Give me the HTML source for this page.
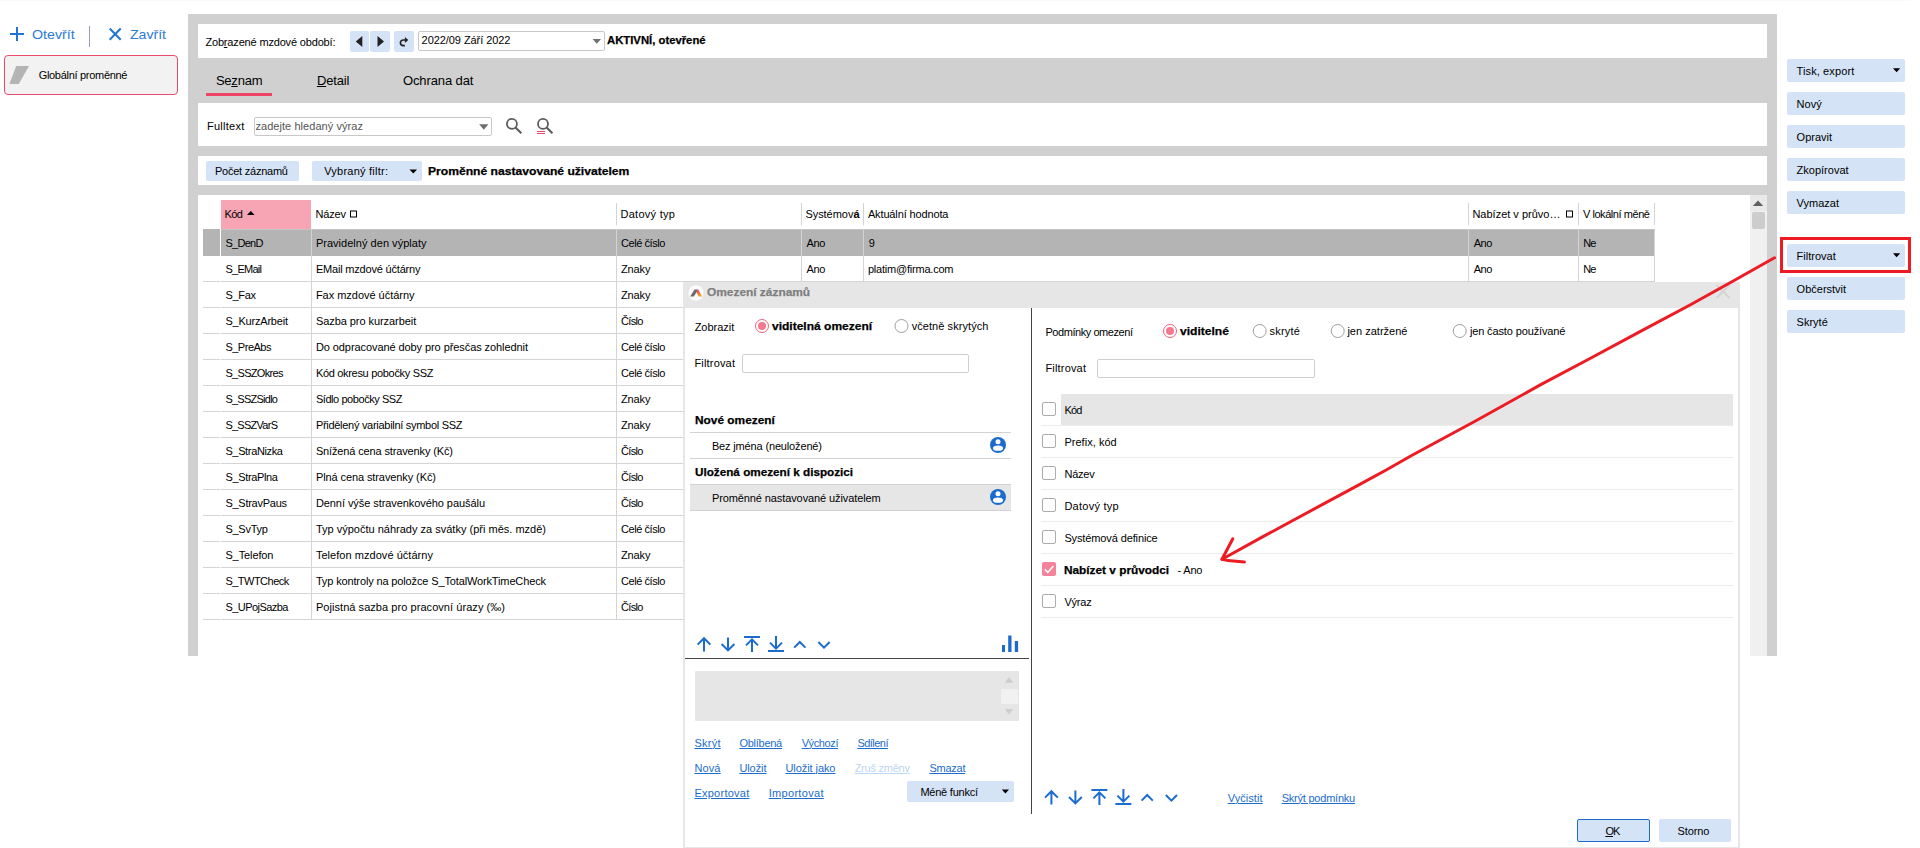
<!DOCTYPE html>
<html lang="cs"><head><meta charset="utf-8"><title>Globální proměnné</title><style>
html,body{margin:0;padding:0;}
body{width:1920px;height:848px;background:#fff;position:relative;overflow:hidden;font-family:"Liberation Sans", sans-serif;}
.b{position:absolute;}
.t{position:absolute;white-space:pre;line-height:1;font-family:"Liberation Sans", sans-serif;color:#000;}
svg{position:absolute;overflow:visible;}
u{text-decoration:underline;}
</style></head>
<body>
<div class="b" style="left:0px;top:0px;width:1911px;height:1px;background:#fafafa;"></div>
<svg style="left:0;top:0" width="190" height="100"><g stroke="#2173d6" stroke-width="2" fill="none"><path d="M10 34H24M17 27V41"/><path d="M109.7 28.5L120.7 39.7M120.7 28.5L109.7 39.7"/></g><path d="M89.5 26V47" stroke="#9a9ad2" stroke-width="1"/></svg>
<span class="t" style="left:32.30px;top:27.57px;font-size:13.5px;color:#2b7ad8;transform:scaleX(1.0514);transform-origin:0 0;">Otevřít</span>
<span class="t" style="left:129.90px;top:27.57px;font-size:13.5px;color:#2b7ad8;transform:scaleX(1.0430);transform-origin:0 0;">Zavřít</span>
<div class="b" style="left:4px;top:55px;width:174px;height:40px;background:#f2f2f2;border:1px solid #ea4a6e;box-sizing:border-box;border-radius:4px;"></div>
<svg style="left:0;top:0" width="190" height="100"><path d="M16.2 66H29L18.8 84H9.4Z" fill="#b4b4b4"/></svg>
<span class="t" style="left:38.65px;top:69.69px;font-size:11px;letter-spacing:-0.295px;">Globální proměnné</span>
<div class="b" style="left:188px;top:14px;width:1589px;height:642px;background:#d0d0d0;"></div>
<div class="b" style="left:198px;top:24px;width:1569px;height:34px;background:#fff;"></div>
<div class="b" style="left:198px;top:103px;width:1569px;height:43px;background:#fff;"></div>
<div class="b" style="left:198px;top:156px;width:1569px;height:29px;background:#fff;"></div>
<div class="b" style="left:198px;top:195px;width:1552px;height:461px;background:#fff;"></div>
<div class="b" style="left:1750px;top:195px;width:17px;height:461px;background:#f0f0f0;"></div>
<span class="t" style="left:205.40px;top:36.69px;font-size:11px;letter-spacing:-0.166px;">Zob<u>r</u>azené mzdové období:</span>
<div class="b" style="left:350px;top:31px;width:19px;height:21px;background:#d4e3f5;border-radius:2px;"></div>
<div class="b" style="left:370px;top:31px;width:20px;height:21px;background:#d4e3f5;border-radius:2px;"></div>
<div class="b" style="left:394px;top:31px;width:20px;height:21px;background:#d4e3f5;border-radius:2px;"></div>
<svg style="left:0;top:0" width="700" height="60"><path d="M362.3 36V47L355.8 41.5Z" fill="#222"/><path d="M377.5 36V47L384 41.5Z" fill="#222"/><path d="M405.4 40H403.6C401.6 40 400.4 41.3 400.4 42.8C400.4 44.4 401.8 45.6 403.4 45.6H404.9" fill="none" stroke="#222" stroke-width="1.6"/><path d="M404.9 37L408.3 40L404.9 43Z" fill="#222"/></svg>
<div class="b" style="left:418px;top:31px;width:187px;height:20px;background:#fff;border:1px solid #c8c8c8;box-sizing:border-box;border-radius:2px;"></div>
<span class="t" style="left:421.60px;top:34.69px;font-size:11px;letter-spacing:-0.063px;">2022/09 Září 2022</span>
<svg style="left:0;top:0" width="700" height="60"><path d="M592.6 39H601L596.8 43.8Z" fill="#707070"/></svg>
<span class="t" style="left:607.20px;top:34.69px;font-size:11px;font-weight:700;-webkit-text-stroke:0.25px;transform:scaleX(1.0274);transform-origin:0 0;">AKTIVNÍ, otevřené</span>
<span class="t" style="left:215.90px;top:74.00px;font-size:13px;letter-spacing:-0.221px;">Se<u>z</u>nam</span>
<span class="t" style="left:316.90px;top:74.00px;font-size:13px;letter-spacing:-0.130px;"><u>D</u>etail</span>
<span class="t" style="left:402.90px;top:74.00px;font-size:13px;letter-spacing:-0.095px;">Ochrana dat</span>
<div class="b" style="left:206px;top:93px;width:66px;height:3px;background:#ee4468;"></div>
<span class="t" style="left:206.90px;top:121.19px;font-size:11px;letter-spacing:0.269px;">Fulltext</span>
<div class="b" style="left:254px;top:117px;width:238px;height:19px;background:#fff;border:1px solid #c8c8c8;box-sizing:border-box;border-radius:2px;"></div>
<span class="t" style="left:255.40px;top:120.69px;font-size:11px;color:#555;letter-spacing:0.060px;">zadejte hledaný výraz</span>
<svg style="left:0;top:0" width="700" height="150"><path d="M479.2 124.3H488.4L483.8 129.8Z" fill="#6e6e6e"/><g fill="none" stroke="#5c5c5c" stroke-width="1.8"><circle cx="511.9" cy="123.9" r="5"/><path d="M515.5 127.5L521.3 133.3" stroke-width="2.1"/><circle cx="543" cy="123.9" r="5"/><path d="M546.6 127.5L552.4 133.3" stroke-width="2.1"/></g><path d="M537 131.5H545M537 133.5H545" stroke="#e8456a" stroke-width="1"/></svg>
<div class="b" style="left:206px;top:161px;width:93px;height:20px;background:#d4e3f5;border-radius:2px;"></div>
<span class="t" style="left:214.90px;top:165.69px;font-size:11px;letter-spacing:-0.227px;">Počet záznamů</span>
<div class="b" style="left:312px;top:161px;width:110px;height:20px;background:#d4e3f5;border-radius:2px;"></div>
<span class="t" style="left:324.15px;top:165.69px;font-size:11px;letter-spacing:0.240px;">Vybraný filtr:</span>
<svg style="left:0;top:0" width="700" height="200"><path d="M409.5 169.5H417L413.25 173.5Z" fill="#000"/></svg>
<span class="t" style="left:427.90px;top:165.69px;font-size:11px;font-weight:700;-webkit-text-stroke:0.25px;transform:scaleX(1.1015);transform-origin:0 0;">Proměnné nastavované uživatelem</span>
<div class="b" style="left:221px;top:200px;width:90px;height:29px;background:#f7a5b4;"></div>
<span class="t" style="left:224.40px;top:208.69px;font-size:11px;letter-spacing:-0.489px;">Kód</span>
<span class="t" style="left:315.40px;top:208.69px;font-size:11px;letter-spacing:-0.147px;">Název</span>
<span class="t" style="left:620.40px;top:208.69px;font-size:11px;letter-spacing:0.292px;">Datový typ</span>
<span class="t" style="left:805.40px;top:208.69px;font-size:11px;letter-spacing:-0.040px;">Systémov<b>á</b></span>
<span class="t" style="left:867.90px;top:208.69px;font-size:11px;letter-spacing:-0.132px;">Aktuální hodnota</span>
<span class="t" style="left:1472.40px;top:208.69px;font-size:11px;">Nabízet v průvo…</span>
<span class="t" style="left:1582.90px;top:208.69px;font-size:11px;letter-spacing:-0.436px;">V lokální měně</span>
<svg style="left:0;top:0" width="1700" height="230"><path d="M247 215H254.6L250.8 211Z" fill="#000"/><rect x="350.5" y="211" width="6" height="6" fill="none" stroke="#000" stroke-width="1"/><rect x="1566.5" y="211" width="6" height="6" fill="none" stroke="#000" stroke-width="1"/></svg>
<div class="b" style="left:616px;top:203px;width:1px;height:22px;background:#d4d4d4;"></div>
<div class="b" style="left:801px;top:203px;width:1px;height:22px;background:#d4d4d4;"></div>
<div class="b" style="left:863px;top:203px;width:1px;height:22px;background:#d4d4d4;"></div>
<div class="b" style="left:1468px;top:203px;width:1px;height:22px;background:#d4d4d4;"></div>
<div class="b" style="left:1578px;top:203px;width:1px;height:22px;background:#d4d4d4;"></div>
<div class="b" style="left:1654px;top:203px;width:1px;height:22px;background:#d4d4d4;"></div>
<div class="b" style="left:203px;top:229px;width:17px;height:27px;background:#b4b4b4;"></div>
<div class="b" style="left:221px;top:229px;width:1434px;height:27px;background:#b4b4b4;"></div>
<div class="b" style="left:221px;top:229px;width:1434px;height:1px;background:#c4c4c4;"></div>
<div class="b" style="left:203px;top:281px;width:17px;height:1px;background:#d4d4d4;"></div>
<div class="b" style="left:221px;top:281px;width:1434px;height:1px;background:#d4d4d4;"></div>
<div class="b" style="left:203px;top:307px;width:17px;height:1px;background:#d4d4d4;"></div>
<div class="b" style="left:221px;top:307px;width:1434px;height:1px;background:#d4d4d4;"></div>
<div class="b" style="left:203px;top:333px;width:17px;height:1px;background:#d4d4d4;"></div>
<div class="b" style="left:221px;top:333px;width:1434px;height:1px;background:#d4d4d4;"></div>
<div class="b" style="left:203px;top:359px;width:17px;height:1px;background:#d4d4d4;"></div>
<div class="b" style="left:221px;top:359px;width:1434px;height:1px;background:#d4d4d4;"></div>
<div class="b" style="left:203px;top:385px;width:17px;height:1px;background:#d4d4d4;"></div>
<div class="b" style="left:221px;top:385px;width:1434px;height:1px;background:#d4d4d4;"></div>
<div class="b" style="left:203px;top:411px;width:17px;height:1px;background:#d4d4d4;"></div>
<div class="b" style="left:221px;top:411px;width:1434px;height:1px;background:#d4d4d4;"></div>
<div class="b" style="left:203px;top:437px;width:17px;height:1px;background:#d4d4d4;"></div>
<div class="b" style="left:221px;top:437px;width:1434px;height:1px;background:#d4d4d4;"></div>
<div class="b" style="left:203px;top:463px;width:17px;height:1px;background:#d4d4d4;"></div>
<div class="b" style="left:221px;top:463px;width:1434px;height:1px;background:#d4d4d4;"></div>
<div class="b" style="left:203px;top:489px;width:17px;height:1px;background:#d4d4d4;"></div>
<div class="b" style="left:221px;top:489px;width:1434px;height:1px;background:#d4d4d4;"></div>
<div class="b" style="left:203px;top:515px;width:17px;height:1px;background:#d4d4d4;"></div>
<div class="b" style="left:221px;top:515px;width:1434px;height:1px;background:#d4d4d4;"></div>
<div class="b" style="left:203px;top:541px;width:17px;height:1px;background:#d4d4d4;"></div>
<div class="b" style="left:221px;top:541px;width:1434px;height:1px;background:#d4d4d4;"></div>
<div class="b" style="left:203px;top:567px;width:17px;height:1px;background:#d4d4d4;"></div>
<div class="b" style="left:221px;top:567px;width:1434px;height:1px;background:#d4d4d4;"></div>
<div class="b" style="left:203px;top:593px;width:17px;height:1px;background:#d4d4d4;"></div>
<div class="b" style="left:221px;top:593px;width:1434px;height:1px;background:#d4d4d4;"></div>
<div class="b" style="left:203px;top:619px;width:17px;height:1px;background:#d4d4d4;"></div>
<div class="b" style="left:221px;top:619px;width:1434px;height:1px;background:#d4d4d4;"></div>
<div class="b" style="left:311px;top:230px;width:1px;height:390px;background:#d4d4d4;"></div>
<div class="b" style="left:616px;top:230px;width:1px;height:390px;background:#d4d4d4;"></div>
<div class="b" style="left:801px;top:230px;width:1px;height:390px;background:#d4d4d4;"></div>
<div class="b" style="left:863px;top:230px;width:1px;height:390px;background:#d4d4d4;"></div>
<div class="b" style="left:1468px;top:230px;width:1px;height:390px;background:#d4d4d4;"></div>
<div class="b" style="left:1578px;top:230px;width:1px;height:390px;background:#d4d4d4;"></div>
<div class="b" style="left:1654px;top:230px;width:1px;height:390px;background:#d4d4d4;"></div>
<span class="t" style="left:225.40px;top:237.69px;font-size:11px;letter-spacing:-0.696px;">S_DenD</span>
<span class="t" style="left:315.90px;top:237.69px;font-size:11px;letter-spacing:0.026px;">Pravidelný den výplaty</span>
<span class="t" style="left:620.90px;top:237.69px;font-size:11px;letter-spacing:-0.411px;">Celé číslo</span>
<span class="t" style="left:225.40px;top:263.69px;font-size:11px;letter-spacing:-0.728px;">S_EMail</span>
<span class="t" style="left:315.90px;top:263.69px;font-size:11px;letter-spacing:-0.190px;">EMail mzdové účtárny</span>
<span class="t" style="left:620.90px;top:263.69px;font-size:11px;letter-spacing:-0.092px;">Znaky</span>
<span class="t" style="left:225.40px;top:289.69px;font-size:11px;letter-spacing:-0.299px;">S_Fax</span>
<span class="t" style="left:315.90px;top:289.69px;font-size:11px;letter-spacing:-0.026px;">Fax mzdové účtárny</span>
<span class="t" style="left:620.90px;top:289.69px;font-size:11px;letter-spacing:-0.092px;">Znaky</span>
<span class="t" style="left:225.40px;top:315.69px;font-size:11px;letter-spacing:-0.201px;">S_KurzArbeit</span>
<span class="t" style="left:315.90px;top:315.69px;font-size:11px;letter-spacing:-0.061px;">Sazba pro kurzarbeit</span>
<span class="t" style="left:620.90px;top:315.69px;font-size:11px;letter-spacing:-0.616px;">Číslo</span>
<span class="t" style="left:225.40px;top:341.69px;font-size:11px;letter-spacing:-0.490px;">S_PreAbs</span>
<span class="t" style="left:315.90px;top:341.69px;font-size:11px;letter-spacing:-0.079px;">Do odpracované doby pro přesčas zohlednit</span>
<span class="t" style="left:620.90px;top:341.69px;font-size:11px;letter-spacing:-0.411px;">Celé číslo</span>
<span class="t" style="left:225.40px;top:367.69px;font-size:11px;letter-spacing:-0.676px;">S_SSZOkres</span>
<span class="t" style="left:315.90px;top:367.69px;font-size:11px;letter-spacing:-0.311px;">Kód okresu pobočky SSZ</span>
<span class="t" style="left:620.90px;top:367.69px;font-size:11px;letter-spacing:-0.411px;">Celé číslo</span>
<span class="t" style="left:225.40px;top:393.69px;font-size:11px;letter-spacing:-0.746px;">S_SSZSidlo</span>
<span class="t" style="left:315.90px;top:393.69px;font-size:11px;letter-spacing:-0.435px;">Sídlo pobočky SSZ</span>
<span class="t" style="left:620.90px;top:393.69px;font-size:11px;letter-spacing:-0.092px;">Znaky</span>
<span class="t" style="left:225.40px;top:419.69px;font-size:11px;letter-spacing:-0.737px;">S_SSZVarS</span>
<span class="t" style="left:315.90px;top:419.69px;font-size:11px;letter-spacing:-0.290px;">Přidělený variabilní symbol SSZ</span>
<span class="t" style="left:620.90px;top:419.69px;font-size:11px;letter-spacing:-0.092px;">Znaky</span>
<span class="t" style="left:225.40px;top:445.69px;font-size:11px;letter-spacing:-0.354px;">S_StraNizka</span>
<span class="t" style="left:315.90px;top:445.69px;font-size:11px;letter-spacing:-0.136px;">Snížená cena stravenky (Kč)</span>
<span class="t" style="left:620.90px;top:445.69px;font-size:11px;letter-spacing:-0.616px;">Číslo</span>
<span class="t" style="left:225.40px;top:471.69px;font-size:11px;letter-spacing:-0.340px;">S_StraPlna</span>
<span class="t" style="left:315.90px;top:471.69px;font-size:11px;letter-spacing:-0.095px;">Plná cena stravenky (Kč)</span>
<span class="t" style="left:620.90px;top:471.69px;font-size:11px;letter-spacing:-0.616px;">Číslo</span>
<span class="t" style="left:225.40px;top:497.69px;font-size:11px;letter-spacing:-0.260px;">S_StravPaus</span>
<span class="t" style="left:315.90px;top:497.69px;font-size:11px;letter-spacing:-0.068px;">Denní výše stravenkového paušálu</span>
<span class="t" style="left:620.90px;top:497.69px;font-size:11px;letter-spacing:-0.616px;">Číslo</span>
<span class="t" style="left:225.40px;top:523.69px;font-size:11px;letter-spacing:-0.239px;">S_SvTyp</span>
<span class="t" style="left:315.90px;top:523.69px;font-size:11px;letter-spacing:0.005px;">Typ výpočtu náhrady za svátky (při měs. mzdě)</span>
<span class="t" style="left:620.90px;top:523.69px;font-size:11px;letter-spacing:-0.411px;">Celé číslo</span>
<span class="t" style="left:225.40px;top:549.69px;font-size:11px;letter-spacing:-0.105px;">S_Telefon</span>
<span class="t" style="left:315.90px;top:549.69px;font-size:11px;letter-spacing:0.044px;">Telefon mzdové účtárny</span>
<span class="t" style="left:620.90px;top:549.69px;font-size:11px;letter-spacing:-0.092px;">Znaky</span>
<span class="t" style="left:225.40px;top:575.69px;font-size:11px;letter-spacing:-0.513px;">S_TWTCheck</span>
<span class="t" style="left:315.90px;top:575.69px;font-size:11px;letter-spacing:-0.137px;">Typ kontroly na položce S_TotalWorkTimeCheck</span>
<span class="t" style="left:620.90px;top:575.69px;font-size:11px;letter-spacing:-0.411px;">Celé číslo</span>
<span class="t" style="left:225.40px;top:601.69px;font-size:11px;letter-spacing:-0.540px;">S_UPojSazba</span>
<span class="t" style="left:315.90px;top:601.69px;font-size:11px;letter-spacing:0.056px;">Pojistná sazba pro pracovní úrazy (‰)</span>
<span class="t" style="left:620.90px;top:601.69px;font-size:11px;letter-spacing:-0.616px;">Číslo</span>
<span class="t" style="left:806.40px;top:237.69px;font-size:11px;letter-spacing:-0.239px;">Ano</span>
<span class="t" style="left:806.40px;top:263.69px;font-size:11px;letter-spacing:-0.239px;">Ano</span>
<span class="t" style="left:868.65px;top:237.69px;font-size:11px;">9</span>
<span class="t" style="left:867.90px;top:263.69px;font-size:11px;letter-spacing:-0.213px;">platim@firma.com</span>
<span class="t" style="left:1473.65px;top:237.69px;font-size:11px;letter-spacing:-0.364px;">Ano</span>
<span class="t" style="left:1473.65px;top:263.69px;font-size:11px;letter-spacing:-0.364px;">Ano</span>
<span class="t" style="left:1583.15px;top:237.69px;font-size:11px;letter-spacing:-0.713px;">Ne</span>
<span class="t" style="left:1583.15px;top:263.69px;font-size:11px;letter-spacing:-0.713px;">Ne</span>
<div class="b" style="left:1750px;top:195px;width:17px;height:16px;background:#e9e9e9;"></div>
<svg style="left:0;top:0" width="1800" height="240"><path d="M1752.8 206H1763.2L1758 200.5Z" fill="#606060"/></svg>
<div class="b" style="left:1752px;top:212px;width:13px;height:17px;background:#cdcdcd;border-radius:2px;"></div>
<div class="b" style="left:1787px;top:59px;width:118px;height:23px;background:#d4e3f5;border-radius:2px;"></div>
<span class="t" style="left:1796.60px;top:65.69px;font-size:11px;letter-spacing:0.109px;">Tisk, export</span>
<svg style="left:0;top:0" width="1920" height="400"><path d="M1893 68.3H1900.2L1896.6 72.3Z" fill="#000"/></svg>
<div class="b" style="left:1787px;top:92px;width:118px;height:23px;background:#d4e3f5;border-radius:2px;"></div>
<span class="t" style="left:1796.60px;top:98.69px;font-size:11px;">Nový</span>
<div class="b" style="left:1787px;top:125px;width:118px;height:23px;background:#d4e3f5;border-radius:2px;"></div>
<span class="t" style="left:1796.60px;top:131.69px;font-size:11px;">Opravit</span>
<div class="b" style="left:1787px;top:158px;width:118px;height:23px;background:#d4e3f5;border-radius:2px;"></div>
<span class="t" style="left:1796.60px;top:164.69px;font-size:11px;">Zkopírovat</span>
<div class="b" style="left:1787px;top:191px;width:118px;height:23px;background:#d4e3f5;border-radius:2px;"></div>
<span class="t" style="left:1796.60px;top:197.69px;font-size:11px;">Vymazat</span>
<div class="b" style="left:1787px;top:244px;width:118px;height:23px;background:#d4e3f5;border-radius:2px;"></div>
<span class="t" style="left:1796.60px;top:250.69px;font-size:11px;">Filtrovat</span>
<svg style="left:0;top:0" width="1920" height="400"><path d="M1893 253.3H1900.2L1896.6 257.3Z" fill="#000"/></svg>
<div class="b" style="left:1787px;top:277px;width:118px;height:23px;background:#d4e3f5;border-radius:2px;"></div>
<span class="t" style="left:1796.60px;top:283.69px;font-size:11px;">Občerstvit</span>
<div class="b" style="left:1787px;top:310px;width:118px;height:23px;background:#d4e3f5;border-radius:2px;"></div>
<span class="t" style="left:1796.60px;top:316.69px;font-size:11px;">Skryté</span>
<div class="b" style="left:1780px;top:237px;width:131px;height:36px;border:3px solid #ed1c24;box-sizing:border-box;"></div>
<div class="b" style="left:683px;top:282px;width:1057px;height:566px;background:#fff;"></div>
<div class="b" style="left:683px;top:282px;width:1057px;height:26px;background:#e6e6e6;"></div>
<div class="b" style="left:683px;top:282px;width:2px;height:566px;background:#e6e6e6;"></div>
<div class="b" style="left:1738px;top:282px;width:2px;height:566px;background:#e6e6e6;"></div>
<div class="b" style="left:683px;top:847px;width:1057px;height:1px;background:#e6e6e6;"></div>
<svg style="left:0;top:0" width="1920" height="848"><defs><linearGradient id="lg" x1="0" y1="0" x2="0.3" y2="1"><stop offset="0" stop-color="#e8307a"/><stop offset="1" stop-color="#f9a11b"/></linearGradient></defs><circle cx="696" cy="293" r="7.7" fill="#fbfbfb"/><path d="M690.2 296.6L694.6 289.6H698.2L693.8 296.6Z" fill="#6a6a6a"/><path d="M696.2 291.4L698.2 289.6L702.1 296.6H698.6Z" fill="url(#lg)"/><path d="M1716.5 285L1729.5 298M1729.5 285L1716.5 298" stroke="#d4d4d4" stroke-width="1.9" fill="none"/></svg>
<span class="t" style="left:706.90px;top:286.69px;font-size:11px;font-weight:700;-webkit-text-stroke:0.25px;color:#7f7f7f;transform:scaleX(1.0812);transform-origin:0 0;">Omezení záznamů</span>
<div class="b" style="left:1031px;top:308px;width:1px;height:506px;background:#444;"></div>
<div class="b" style="left:685px;top:658px;width:344px;height:1px;background:#444;"></div>
<span class="t" style="left:694.65px;top:321.69px;font-size:11px;letter-spacing:-0.014px;">Zobrazit</span>
<span class="t" style="left:772.40px;top:320.69px;font-size:11px;font-weight:700;-webkit-text-stroke:0.25px;transform:scaleX(1.0916);transform-origin:0 0;">viditelná omezení</span>
<span class="t" style="left:911.65px;top:320.69px;font-size:11px;letter-spacing:0.074px;">včetně skrytých</span>
<span class="t" style="left:694.40px;top:357.69px;font-size:11px;letter-spacing:0.184px;">Filtrovat</span>
<div class="b" style="left:742px;top:354px;width:227px;height:19px;background:#fff;border:1px solid #cfcfcf;box-sizing:border-box;border-radius:2px;"></div>
<span class="t" style="left:694.90px;top:414.69px;font-size:11px;font-weight:700;-webkit-text-stroke:0.25px;transform:scaleX(1.0795);transform-origin:0 0;">Nové omezení</span>
<div class="b" style="left:690px;top:432px;width:321px;height:1px;background:#d2d2d2;"></div>
<span class="t" style="left:711.90px;top:440.69px;font-size:11px;letter-spacing:-0.151px;">Bez jména (neuložené)</span>
<div class="b" style="left:690px;top:458px;width:321px;height:1px;background:#d2d2d2;"></div>
<span class="t" style="left:694.90px;top:466.69px;font-size:11px;font-weight:700;-webkit-text-stroke:0.25px;transform:scaleX(1.0643);transform-origin:0 0;">Uložená omezení k dispozici</span>
<div class="b" style="left:690px;top:484px;width:321px;height:27px;background:#e6e6e6;"></div>
<div class="b" style="left:690px;top:484px;width:321px;height:1px;background:#d2d2d2;"></div>
<div class="b" style="left:690px;top:510px;width:321px;height:1px;background:#d2d2d2;"></div>
<span class="t" style="left:711.90px;top:492.69px;font-size:11px;letter-spacing:-0.099px;">Proměnné nastavované uživatelem</span>
<div class="b" style="left:695px;top:671px;width:324px;height:50px;background:#e6e6e6;border-radius:1px;"></div>
<div class="b" style="left:1001px;top:689px;width:17px;height:15px;background:#f1f1f1;"></div>
<span class="t" style="left:694.40px;top:737.69px;font-size:11px;color:#1b6ccd;letter-spacing:0.259px;text-decoration:underline;">Skrýt</span>
<span class="t" style="left:739.40px;top:737.69px;font-size:11px;color:#1b6ccd;letter-spacing:-0.258px;text-decoration:underline;">Oblíbená</span>
<span class="t" style="left:801.65px;top:737.69px;font-size:11px;color:#1b6ccd;letter-spacing:-0.382px;text-decoration:underline;">Výchozí</span>
<span class="t" style="left:857.40px;top:737.69px;font-size:11px;color:#1b6ccd;letter-spacing:-0.525px;text-decoration:underline;">Sdílení</span>
<span class="t" style="left:694.40px;top:762.69px;font-size:11px;color:#1b6ccd;letter-spacing:0.138px;text-decoration:underline;">Nová</span>
<span class="t" style="left:739.40px;top:762.69px;font-size:11px;color:#1b6ccd;letter-spacing:-0.083px;text-decoration:underline;">Uložit</span>
<span class="t" style="left:785.40px;top:762.69px;font-size:11px;color:#1b6ccd;letter-spacing:-0.065px;text-decoration:underline;">Uložit jako</span>
<span class="t" style="left:854.65px;top:762.69px;font-size:11px;color:#bcd5f1;letter-spacing:-0.235px;text-decoration:underline;">Zruš změny</span>
<span class="t" style="left:929.40px;top:762.69px;font-size:11px;color:#1b6ccd;letter-spacing:-0.239px;text-decoration:underline;">Smazat</span>
<span class="t" style="left:694.40px;top:787.69px;font-size:11px;color:#1b6ccd;letter-spacing:0.251px;text-decoration:underline;">Exportovat</span>
<span class="t" style="left:768.65px;top:787.69px;font-size:11px;color:#1b6ccd;letter-spacing:0.320px;text-decoration:underline;">Importovat</span>
<div class="b" style="left:907px;top:781px;width:107px;height:21px;background:#d4e3f5;border-radius:2px;"></div>
<span class="t" style="left:920.40px;top:786.69px;font-size:11px;letter-spacing:-0.232px;">Méně funkcí</span>
<span class="t" style="left:1045.40px;top:326.69px;font-size:11px;letter-spacing:-0.437px;">Podmínky omezení</span>
<span class="t" style="left:1180.40px;top:325.69px;font-size:11px;font-weight:700;-webkit-text-stroke:0.25px;transform:scaleX(1.0947);transform-origin:0 0;">viditelné</span>
<span class="t" style="left:1269.40px;top:325.69px;font-size:11px;letter-spacing:0.251px;">skryté</span>
<span class="t" style="left:1347.40px;top:325.69px;font-size:11px;letter-spacing:0.015px;">jen zatržené</span>
<span class="t" style="left:1469.90px;top:325.69px;font-size:11px;letter-spacing:-0.126px;">jen často používané</span>
<span class="t" style="left:1045.40px;top:362.69px;font-size:11px;letter-spacing:0.184px;">Filtrovat</span>
<div class="b" style="left:1097px;top:359px;width:218px;height:19px;background:#fff;border:1px solid #cfcfcf;box-sizing:border-box;border-radius:2px;"></div>
<div class="b" style="left:1061px;top:394px;width:672px;height:31px;background:#e6e6e6;"></div>
<div class="b" style="left:1041px;top:425px;width:692px;height:1px;background:#ececec;"></div>
<div class="b" style="left:1042px;top:402px;width:14px;height:14px;background:#fff;border:1px solid #adadad;box-sizing:border-box;border-radius:2px;"></div>
<span class="t" style="left:1064.40px;top:404.69px;font-size:11px;letter-spacing:-0.739px;">Kód</span>
<div class="b" style="left:1041px;top:457px;width:692px;height:1px;background:#ececec;"></div>
<div class="b" style="left:1042px;top:434px;width:14px;height:14px;background:#fff;border:1px solid #adadad;box-sizing:border-box;border-radius:2px;"></div>
<span class="t" style="left:1064.40px;top:436.69px;font-size:11px;letter-spacing:0.038px;">Prefix, kód</span>
<div class="b" style="left:1041px;top:489px;width:692px;height:1px;background:#ececec;"></div>
<div class="b" style="left:1042px;top:466px;width:14px;height:14px;background:#fff;border:1px solid #adadad;box-sizing:border-box;border-radius:2px;"></div>
<span class="t" style="left:1064.40px;top:468.69px;font-size:11px;letter-spacing:-0.209px;">Název</span>
<div class="b" style="left:1041px;top:521px;width:692px;height:1px;background:#ececec;"></div>
<div class="b" style="left:1042px;top:498px;width:14px;height:14px;background:#fff;border:1px solid #adadad;box-sizing:border-box;border-radius:2px;"></div>
<span class="t" style="left:1064.40px;top:500.69px;font-size:11px;letter-spacing:0.265px;">Datový typ</span>
<div class="b" style="left:1041px;top:553px;width:692px;height:1px;background:#ececec;"></div>
<div class="b" style="left:1042px;top:530px;width:14px;height:14px;background:#fff;border:1px solid #adadad;box-sizing:border-box;border-radius:2px;"></div>
<span class="t" style="left:1064.40px;top:532.69px;font-size:11px;letter-spacing:-0.120px;">Systémová definice</span>
<div class="b" style="left:1041px;top:585px;width:692px;height:1px;background:#ececec;"></div>
<div class="b" style="left:1042px;top:562px;width:14px;height:14px;background:#f4829a;border-radius:2px;"></div>
<span class="t" style="left:1064.40px;top:564.69px;font-size:11px;font-weight:700;-webkit-text-stroke:0.25px;transform:scaleX(1.0747);transform-origin:0 0;">Nabízet v průvodci</span>
<span class="t" style="left:1177.40px;top:564.69px;font-size:11px;letter-spacing:-0.147px;">- Ano</span>
<div class="b" style="left:1041px;top:617px;width:692px;height:1px;background:#ececec;"></div>
<div class="b" style="left:1042px;top:594px;width:14px;height:14px;background:#fff;border:1px solid #adadad;box-sizing:border-box;border-radius:2px;"></div>
<span class="t" style="left:1064.40px;top:596.69px;font-size:11px;letter-spacing:-0.194px;">Výraz</span>
<span class="t" style="left:1227.65px;top:792.69px;font-size:11px;color:#1b6ccd;letter-spacing:0.059px;text-decoration:underline;">Vyčistit</span>
<span class="t" style="left:1281.65px;top:792.69px;font-size:11px;color:#1b6ccd;letter-spacing:-0.217px;text-decoration:underline;">Skrýt podmínku</span>
<div class="b" style="left:1577px;top:819px;width:73px;height:23px;background:#d4e3f5;border:1px solid #1b6ccd;box-sizing:border-box;border-radius:2px;"></div>
<div class="b" style="left:1659px;top:819px;width:72px;height:23px;background:#d4e3f5;border-radius:2px;"></div>
<span class="t" style="left:1605.40px;top:825.69px;font-size:11px;letter-spacing:-0.900px;"><u>O</u>K</span>
<span class="t" style="left:1677.40px;top:825.69px;font-size:11px;letter-spacing:-0.064px;">Storno</span>
<svg style="left:0;top:0" width="1920" height="848"><circle cx="762" cy="326" r="6.5" fill="#fff" stroke="#f0617c" stroke-width="1"/><circle cx="762" cy="326" r="4" fill="#f4798f"/><circle cx="901.5" cy="326" r="6.5" fill="#fff" stroke="#a0a0a0" stroke-width="1"/><circle cx="998" cy="445" r="8" fill="#1b6ccd"/><circle cx="998" cy="441.7" r="2.5" fill="#fff"/><ellipse cx="998" cy="448.2" rx="5" ry="2.6" fill="#fff"/><circle cx="998" cy="497" r="8" fill="#1b6ccd"/><circle cx="998" cy="493.7" r="2.5" fill="#fff"/><ellipse cx="998" cy="500.2" rx="5" ry="2.6" fill="#fff"/><g fill="none" stroke="#1b6ccd" stroke-width="2"><path d="M704.0 638V651.6M697.6 644.6L704.0 638.2L710.4 644.6"/><path d="M728.0 637.6V650.6M721.6 644L728.0 650.4L734.4 644"/><path d="M744.0 637H760.0M752.0 639.2V652M746.0 645.4L752.0 639.4L758.0 645.4"/><path d="M768.0 651H784.0M776.0 636V648.8M770.0 642.6L776.0 648.6L782.0 642.6"/><path d="M794.1999999999999 647.6L799.8 642L805.4 647.6"/><path d="M818.4 642L824.0 647.6L829.6 642"/></g><g fill="#1b6ccd"><rect x="1002" y="645" width="3" height="7"/><rect x="1008.2" y="635.5" width="3.3" height="16.5"/><rect x="1014.8" y="641" width="3.3" height="11"/></g><circle cx="1170" cy="331" r="6.5" fill="#fff" stroke="#f0617c" stroke-width="1"/><circle cx="1170" cy="331" r="4" fill="#f4798f"/><circle cx="1259.7" cy="331" r="6.5" fill="#fff" stroke="#a0a0a0" stroke-width="1"/><circle cx="1337.7" cy="331" r="6.5" fill="#fff" stroke="#a0a0a0" stroke-width="1"/><circle cx="1459.7" cy="331" r="6.5" fill="#fff" stroke="#a0a0a0" stroke-width="1"/><g fill="none" stroke="#1b6ccd" stroke-width="2"><path d="M1051.3999999999999 791V804.6M1044.9999999999998 797.6L1051.3999999999999 791.2L1057.8 797.6"/><path d="M1075.3999999999999 790.6V803.6M1068.9999999999998 797L1075.3999999999999 803.4L1081.8 797"/><path d="M1091.3999999999999 790H1107.3999999999999M1099.3999999999999 792.2V805M1093.3999999999999 798.4L1099.3999999999999 792.4L1105.3999999999999 798.4"/><path d="M1115.3999999999999 804H1131.3999999999999M1123.3999999999999 789V801.8M1117.3999999999999 795.6L1123.3999999999999 801.6L1129.3999999999999 795.6"/><path d="M1141.6000000000001 800.6L1147.2 795L1152.8 800.6"/><path d="M1165.8 795L1171.3999999999999 800.6L1176.9999999999998 795"/></g><path d="M1004.7 682.7H1013.3L1009 677.3Z" fill="#cdcdcd"/><path d="M1004.7 709.1H1013.3L1009 714.5Z" fill="#cdcdcd"/><path d="M1001.8 789.5H1009L1005.4 793.4Z" fill="#000"/></svg>
<svg style="left:0;top:0" width="1920" height="848"><path d="M1044.8 569.4L1047.8 572.4L1053.4 566" stroke="#fff" stroke-width="1.5" fill="none"/></svg>
<svg style="left:0;top:0" width="1920" height="848"><g fill="none" stroke="#ed1c24" stroke-width="3" stroke-linecap="round" stroke-linejoin="round"><path d="M1774.5 257.8L1735 280L1690 305L1640 331.6L1590 358.5L1541.2 384.4L1475 421.2L1412.5 455L1386.2 470L1357.5 485.6L1325 503.1L1262.5 536.9L1222 559.3"/><path d="M1232.8 538.8L1222 559.3L1228 560.6L1244.4 562"/></g></svg>
</body></html>
